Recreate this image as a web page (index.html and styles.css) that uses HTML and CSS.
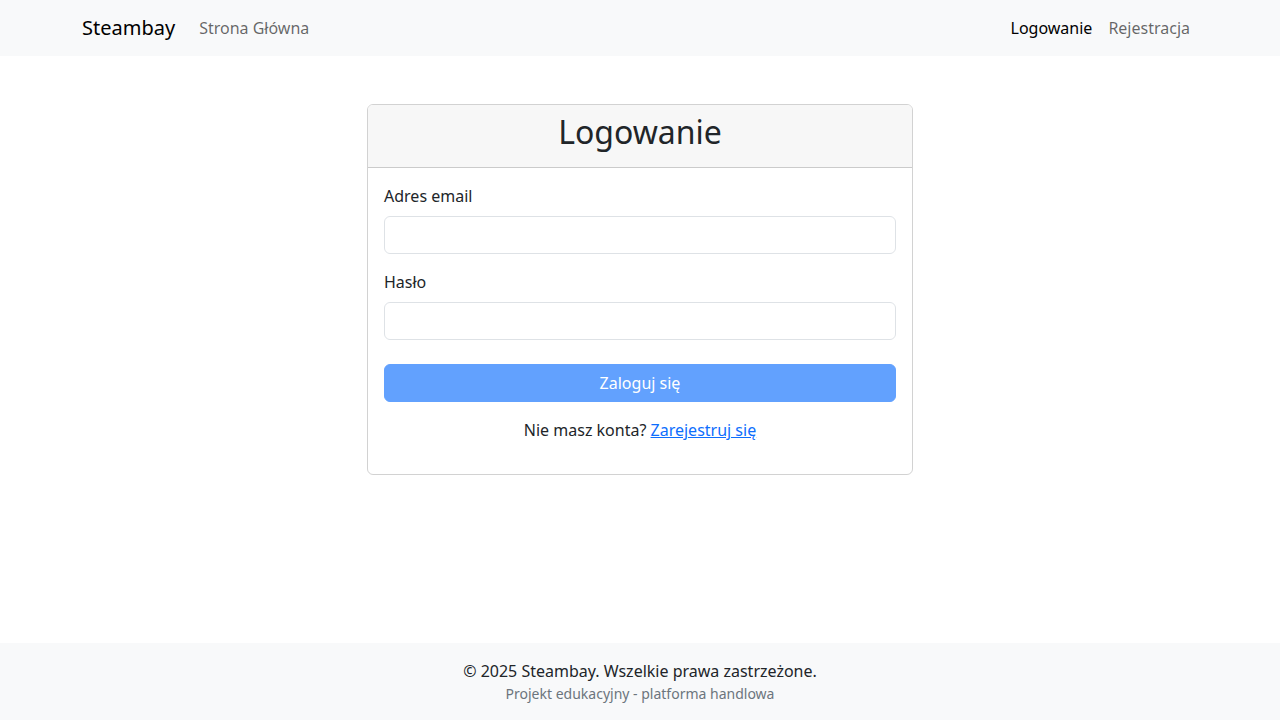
FILE: index.html
```html
<!DOCTYPE html>
<html lang="pl">
<head>
<meta charset="utf-8">
<title>Logowanie - Steambay</title>
<link rel="stylesheet" href="styles.css">
</head>
<body>
<div class="page">
  <nav class="navbar">
    <div class="container nav-inner">
      <a class="brand" href="#">Steambay</a>
      <ul class="nav nav-left">
        <li><a class="nav-link" href="#">Strona Główna</a></li>
      </ul>
      <ul class="nav nav-right">
        <li><a class="nav-link active" href="#">Logowanie</a></li>
        <li><a class="nav-link" href="#">Rejestracja</a></li>
      </ul>
    </div>
  </nav>

  <main class="container main">
    <div class="row">
      <div class="col">
        <div class="card">
          <div class="card-header">
            <h2 class="card-title">Logowanie</h2>
          </div>
          <div class="card-body">
            <form>
              <div class="field">
                <label class="label" for="email">Adres email</label>
                <input class="input" type="email" id="email">
              </div>
              <div class="field field-last">
                <label class="label" for="password">Hasło</label>
                <input class="input" type="password" id="password">
              </div>
              <button class="btn" type="submit" disabled>Zaloguj się</button>
            </form>
            <p class="alt">Nie masz konta? <a href="#" class="link">Zarejestruj się</a></p>
          </div>
        </div>
      </div>
    </div>
  </main>

  <footer class="footer">
    <p class="footer-main">© 2025 Steambay. Wszelkie prawa zastrzeżone.</p>
    <p class="footer-sub">Projekt edukacyjny - platforma handlowa</p>
  </footer>
</div>
</body>
</html>
```

FILE: styles.css
```css
* { box-sizing: border-box; }
html, body { margin: 0; padding: 0; }
body {
  font-family: "Noto Sans", "Liberation Sans", sans-serif;
  font-size: 16px;
  line-height: 1.5;
  color: #212529;
  background: #fff;
}
.page {
  min-height: 100vh;
  display: flex;
  flex-direction: column;
}
.container {
  width: 1140px;
  margin: 0 auto;
  padding: 0 12px;
}
.navbar {
  background: #f8f9fa;
  padding: 8px 0;
}
.nav-inner {
  display: flex;
  align-items: center;
}
.brand {
  font-size: 20px;
  line-height: 30px;
  padding: 5px 0;
  margin-right: 16px;
  color: #000;
  text-decoration: none;
}
.nav {
  list-style: none;
  margin: 0;
  padding: 0;
  display: flex;
}
.nav-right { margin-left: auto; }
.nav-link {
  display: block;
  padding: 8px;
  color: rgba(0, 0, 0, 0.6);
  text-decoration: none;
}
.nav-link.active { color: #000; }

.main { margin-top: 48px; }
.row { display: flex; justify-content: center; }
.col { width: 570px; padding: 0 12px; }

.card {
  border: 1px solid rgba(0, 0, 0, 0.175);
  border-radius: 6px;
  overflow: hidden;
}
.card-header {
  background: #f7f7f7;
  border-bottom: 1px solid rgba(0, 0, 0, 0.175);
  padding: 8px 16px;
  text-align: center;
}
.card-title {
  margin: 0 0 8px;
  font-size: 32px;
  font-weight: 400;
  line-height: 1.2;
}
.card-body { padding: 16px; }
.field { margin-bottom: 16px; }
.field-last { margin-bottom: 24px; }
.label {
  display: block;
  margin-bottom: 8px;
}
.input {
  display: block;
  width: 100%;
  height: 38px;
  padding: 6px 12px;
  font: inherit;
  border: 1px solid #dee2e6;
  border-radius: 6px;
  background: #fff;
}
.btn {
  display: block;
  width: 100%;
  height: 38px;
  font: inherit;
  color: #fff;
  background: #62a1fe;
  border: 1px solid #62a1fe;
  border-radius: 6px;
  padding: 6px 12px;
}
.alt {
  margin: 16px 0;
  text-align: center;
}
.link { color: #0d6efd; text-decoration: underline; }

.footer {
  margin-top: auto;
  background: #f8f9fa;
  padding: 16px 0;
  text-align: center;
}
.footer-main { margin: 0; }
.footer-sub {
  margin: 0;
  font-size: 14px;
  color: #6c757d;
}
```
